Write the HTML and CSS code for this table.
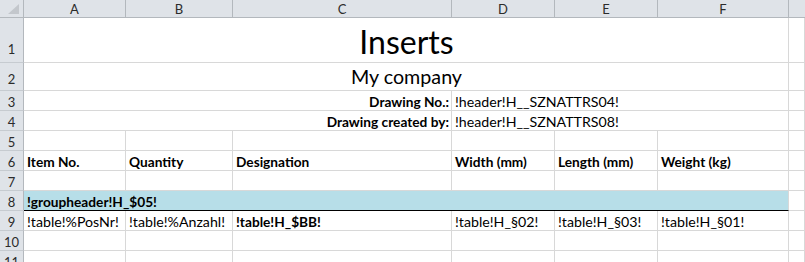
FILE: index.html
```html
<!DOCTYPE html>
<html>
<head>
<meta charset="utf-8">
<link rel="stylesheet" href="styles.css">
</head>
<body>
<div class="sheet">
  <div class="h corner"><span class="tri"></span></div>
  <div class="h col">A</div>
  <div class="h col">B</div>
  <div class="h col">C</div>
  <div class="h col">D</div>
  <div class="h col">E</div>
  <div class="h col">F</div>
  <div class="h col last"></div>

  <div class="h rn r1">1</div>
  <div class="c span6 title">Inserts</div>
  <div class="c"></div>

  <div class="h rn r2">2</div>
  <div class="c span6 sub">My company</div>
  <div class="c"></div>

  <div class="h rn">3</div>
  <div class="c span3 right b">Drawing No.:</div>
  <div class="c span3">!header!H__SZNATTRS04!</div>
  <div class="c"></div>

  <div class="h rn">4</div>
  <div class="c span3 right b">Drawing created by:</div>
  <div class="c span3">!header!H__SZNATTRS08!</div>
  <div class="c"></div>

  <div class="h rn">5</div>
  <div class="c"></div><div class="c"></div><div class="c"></div><div class="c"></div><div class="c"></div><div class="c"></div><div class="c"></div>

  <div class="h rn">6</div>
  <div class="c b">Item No.</div>
  <div class="c b">Quantity</div>
  <div class="c b">Designation</div>
  <div class="c b">Width (mm)</div>
  <div class="c b">Length (mm)</div>
  <div class="c b">Weight (kg)</div>
  <div class="c"></div>

  <div class="h rn">7</div>
  <div class="c"></div><div class="c"></div><div class="c"></div><div class="c"></div><div class="c"></div><div class="c"></div><div class="c"></div>

  <div class="h rn">8</div>
  <div class="c span6 b group">!groupheader!H_$05!</div>
  <div class="c"></div>

  <div class="h rn">9</div>
  <div class="c">!table!%PosNr!</div>
  <div class="c">!table!%Anzahl!</div>
  <div class="c b">!table!H_$BB!</div>
  <div class="c">!table!H_§02!</div>
  <div class="c">!table!H_§03!</div>
  <div class="c">!table!H_§01!</div>
  <div class="c"></div>

  <div class="h rn">10</div>
  <div class="c"></div><div class="c"></div><div class="c"></div><div class="c"></div><div class="c"></div><div class="c"></div><div class="c"></div>

  <div class="h rn">11</div>
  <div class="c"></div><div class="c"></div><div class="c"></div><div class="c"></div><div class="c"></div><div class="c"></div><div class="c"></div>
</div>
</body>
</html>
```
FILE: styles.css
```css
html, body {
  margin: 0;
  padding: 0;
  background: #ffffff;
  overflow: hidden;
}
.sheet {
  display: grid;
  grid-template-columns: 24px 102px 107px 219px 103px 103px 131px 1fr;
  grid-template-rows: 18px 45px 28px repeat(9, 20px);
  width: 805px;
  font-family: Lato, "Liberation Sans", sans-serif;
  font-size: 14.2px;
  color: #000;
}
.sheet > div {
  box-sizing: border-box;
  white-space: nowrap;
  display: flex;
  align-items: flex-end;
  line-height: normal;
}
.h {
  background: #dfe3e8;
  color: #2b2b2b;
  font-size: 13px;
  border-right: 1px solid #b3b8bd;
  border-bottom: 1px solid #b3b8bd;
}
.col {
  justify-content: center;
}
.col.last {
  border-right: none;
}
.corner {
  position: relative;
}
.tri {
  position: absolute;
  left: 8px;
  top: 4px;
  width: 11px;
  height: 10px;
  background: #c3c7cc;
  clip-path: polygon(100% 0, 100% 100%, 0 100%);
}
.rn {
  justify-content: center;
  border-bottom-color: #c6cbd0;
}
.rn.r1 { padding-bottom: 5px; }
.rn.r2 { padding-bottom: 3px; }
.c {
  border-right: 1px solid #d8d8d8;
  border-bottom: 1px solid #d8d8d8;
  padding: 0 2px 0 3px;
}
.span6 { grid-column: span 6; justify-content: center; }
.span3 { grid-column: span 3; }
.right { justify-content: flex-end; }
.b { font-weight: 700; font-size: 13.7px; }
.title { font-size: 32px; padding-bottom: 1px; }
.sub { font-size: 19.7px; padding-bottom: 2px; }
.group {
  background: #b7dee8;
  justify-content: flex-start;
  border-bottom: 1px solid #000;
}
```
